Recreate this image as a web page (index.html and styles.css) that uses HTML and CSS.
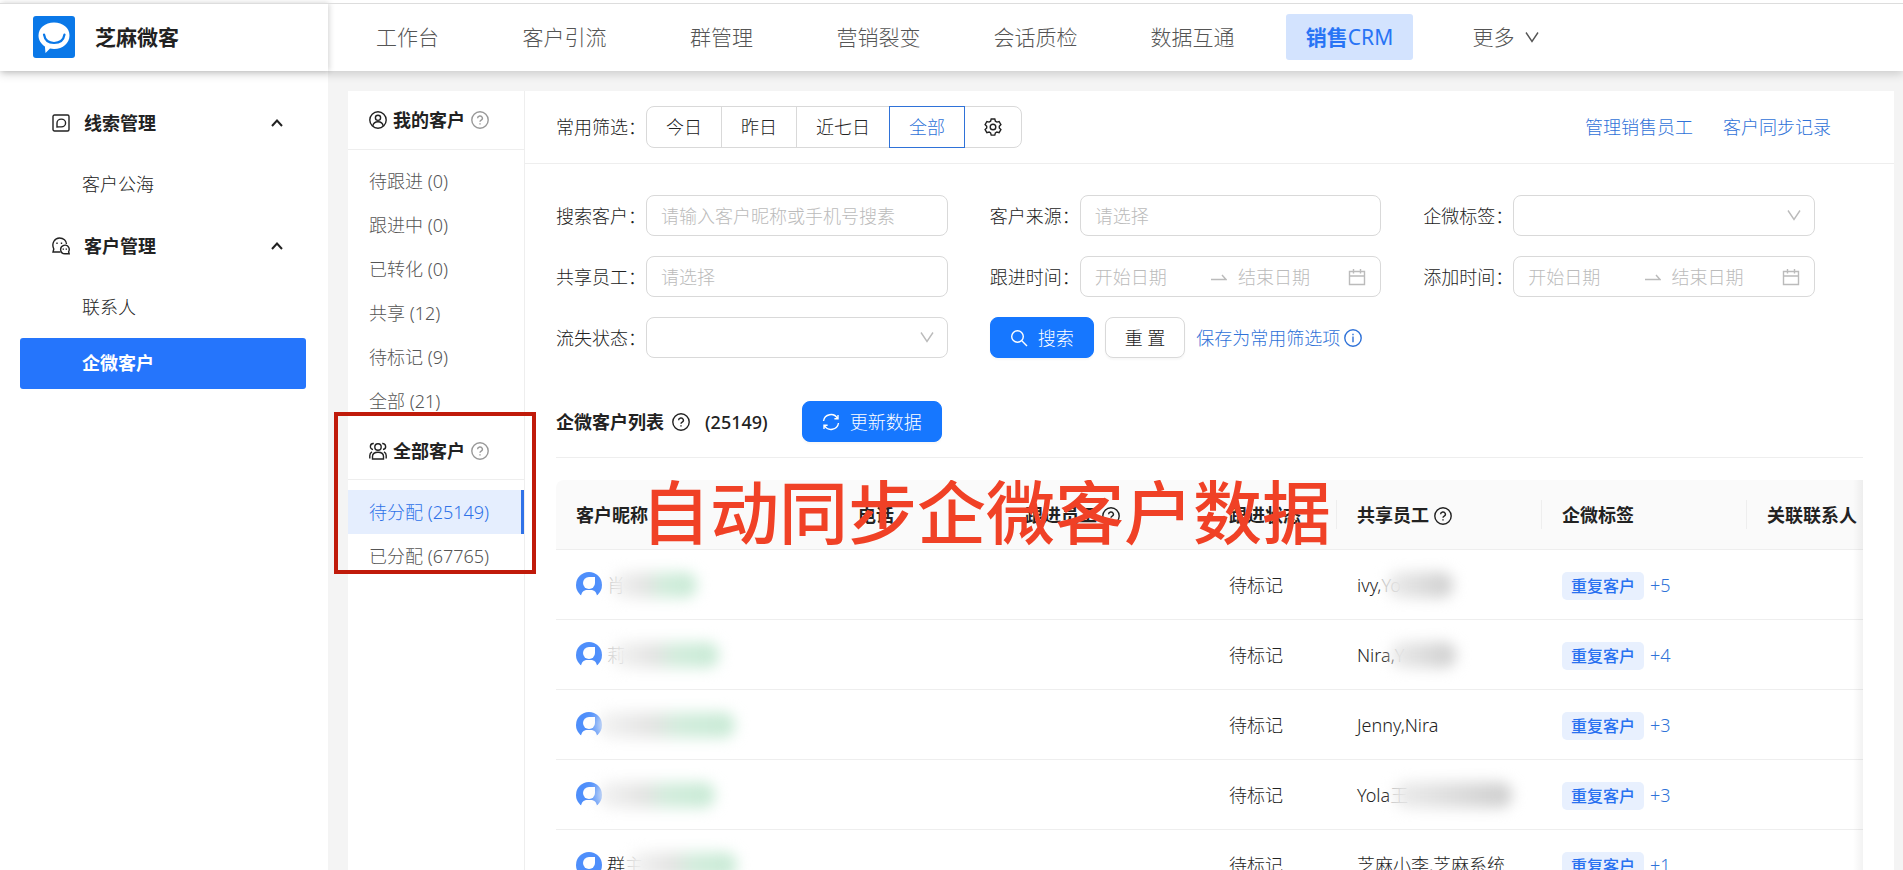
FILE: index.html
```html
<!DOCTYPE html>
<html lang="zh-CN">
<head>
<meta charset="utf-8">
<title>芝麻微客</title>
<link rel="stylesheet" href="styles.css">
</head>
<body>
<svg class="sprite" aria-hidden="true">
  <symbol id="i-help" viewBox="0 0 18 18"><circle cx="9" cy="9" r="8.2"/><path d="M6.600 7.200a2.400 2.200 0 1 1 3.600 1.900c-.8.5-1.200.8-1.200 1.700M9 12.200v1.400"/></symbol>
  <symbol id="i-info" viewBox="0 0 18 18"><circle cx="9" cy="9" r="8.2"/><path d="M9 7.600v5.600M9 4.800v1.400"/></symbol>
  <symbol id="i-down" viewBox="0 0 16 16"><path d="M2 3.500 8 12.500 14 3.500"/></symbol>
  <symbol id="i-up" viewBox="0 0 14 14"><path d="M2 10 7 4.500 12 10"/></symbol>
  <symbol id="i-swap" viewBox="0 0 16 16"><path d="M0 10.500h15L11 6"/></symbol>
  <symbol id="i-cal" viewBox="0 0 18 18"><path d="M1.500 3.500h15v13h-15zM1.500 8h15M5.500 1v4.500M12.500 1v4.500"/></symbol>
  <symbol id="i-avatar" viewBox="0 0 26 26"><circle cx="13" cy="13" r="13" fill="#4f8ffb"/><path d="M13 5h6v6a6 6 0 1 1-6-6z" fill="#fff"/><path d="M5 24c.5-4 3-6 6-6h4c3 0 5.500 2 6 6a13 13 0 0 1-16 0z" fill="#fff"/></symbol>
</svg>
<div class="app">
  <header class="topbar">
    <div class="brand">
      <svg class="logo" viewBox="0 0 42 42"><rect width="42" height="42" rx="3" fill="#0a78e8"/><path d="M21 6.500c9 0 15.500 5.500 15.500 13S30 33 21 33c-1.500 0-2.800-.2-4-.5L12.500 37l-.6-6.500C8 28 5.500 24 5.500 19.500 5.500 12 12 6.500 21 6.500z" fill="#fff"/><path d="M11 18.500c1 6 5 8.500 10 8.500s9.500-2.500 10.500-8.500" fill="none" stroke="#0a78e8" stroke-width="2.200" stroke-linecap="round"/></svg>
      <strong>芝麻微客</strong>
    </div>
    <nav class="nav">
      <a href="#">工作台</a><a href="#">客户引流</a><a href="#">群管理</a><a href="#">营销裂变</a><a href="#">会话质检</a><a href="#">数据互通</a><a href="#" class="on"><span><b>销售</b>CRM</span></a><a href="#">更多<svg class="ic nav-ic"><use href="#i-down"/></svg></a>
    </nav>
  </header>
  <div class="body">
    <aside class="side">
      <button class="group"><svg class="ic s18" viewBox="0 0 18 18"><rect x="1" y="1" width="16" height="16" rx="1.500"/><path d="M5 13V9A4.300 3.900 0 1 1 9.300 12.900H7z"/></svg>线索管理<svg class="ic s14"><use href="#i-up"/></svg></button>
      <a href="#" class="sub">客户公海</a>
      <button class="group"><svg class="ic s18" viewBox="0 0 18 18"><path d="M8.500 15H1l.8-3C-1 6 3 1 7.500 1 11.500 1 14.500 3.500 14.500 7M5 5.500v1.600M9.500 5.500v1.600"/><path d="M17.200 16.800H13a4.300 4.300 0 1 1 3.900-6c.6 1.500.4 2.800-.3 4zM11.300 11.500v1.200M14.300 11.500v1.200"/></svg>客户管理<svg class="ic s14"><use href="#i-up"/></svg></button>
      <a href="#" class="sub">联系人</a>
      <a href="#" class="sub on">企微客户</a>
    </aside>
    <main class="panel">
      <section class="cats">
        <h2><svg class="ic s18" viewBox="0 0 18 18"><circle cx="9" cy="9" r="8.200"/><circle cx="9" cy="6.800" r="2.600"/><path d="M3.800 15c.5-3 2.400-4.300 5.200-4.300s4.700 1.300 5.200 4.300"/></svg>我的客户<svg class="ic s18 mute"><use href="#i-help"/></svg></h2>
        <ul>
          <li><a href="#">待跟进 (0)</a></li><li><a href="#">跟进中 (0)</a></li><li><a href="#">已转化 (0)</a></li><li><a href="#">共享 (12)</a></li><li><a href="#">待标记 (9)</a></li><li><a href="#">全部 (21)</a></li>
        </ul>
        <div class="marked">
        <h2><svg class="ic s18" viewBox="0 0 18 18"><circle cx="9" cy="5" r="3.200"/><path d="M3.500 17v-2.500c0-2.800 2-4.300 5.500-4.300s5.500 1.500 5.500 4.300V17zM4.800 1.500a3 3 0 0 0-.8 6M13.200 1.500a3 3 0 0 1 .8 6M.8 16.500v-3c0-1.800.8-3 2.200-3.700M17.200 16.500v-3c0-1.800-.8-3-2.200-3.700"/></svg>全部客户<svg class="ic s18 mute"><use href="#i-help"/></svg></h2>
        <ul>
          <li class="on"><a href="#">待分配 (25149)</a></li><li><a href="#">已分配 (67765)</a></li>
        </ul>
        </div>
      </section>
      <section class="content">
        <div class="toolbar">
          <span>常用筛选：</span>
          <div class="seg"><button>今日</button><button>昨日</button><button>近七日</button><button class="on">全部</button><button aria-label="设置"><svg class="ic s18" viewBox="0 0 18 18"><path d="M7.200 1h3.600l.6 2.200 1.500.9 2.200-.6 1.800 3.100-1.600 1.600v1.700l1.600 1.600-1.800 3.100-2.200-.6-1.500.9-.6 2.200H7.200l-.6-2.200-1.500-.9-2.200.6-1.800-3.100 1.600-1.600V8.200L1.100 6.600l1.800-3.100 2.200.6 1.500-.9z"/><circle cx="9" cy="9" r="2.800"/></svg></button></div>
          <div class="links"><a href="#">管理销售员工</a><a href="#">客户同步记录</a></div>
        </div>
        <form class="filters">
          <div class="field"><label for="q">搜索客户：</label><input id="q" class="box" placeholder="请输入客户昵称或手机号搜素"></div>
          <div class="field"><label for="src">客户来源：</label><input id="src" class="box" placeholder="请选择"></div>
          <div class="field"><label for="tag">企微标签：</label><div class="pick"><select id="tag" class="box"></select><svg class="ic s16"><use href="#i-down"/></svg></div></div>
          <div class="field"><label for="staff">共享员工：</label><input id="staff" class="box" placeholder="请选择"></div>
          <div class="field"><label for="f1">跟进时间：</label><div class="box range"><input id="f1" placeholder="开始日期"><svg class="ic s16"><use href="#i-swap"/></svg><input aria-label="跟进结束日期" placeholder="结束日期"><svg class="ic s18"><use href="#i-cal"/></svg></div></div>
          <div class="field"><label for="a1">添加时间：</label><div class="box range"><input id="a1" placeholder="开始日期"><svg class="ic s16"><use href="#i-swap"/></svg><input aria-label="添加结束日期" placeholder="结束日期"><svg class="ic s18"><use href="#i-cal"/></svg></div></div>
          <div class="field"><label for="lost">流失状态：</label><div class="pick"><select id="lost" class="box"></select><svg class="ic s16"><use href="#i-down"/></svg></div></div>
          <div class="actions"><button type="button" class="btn primary"><svg class="ic s18" viewBox="0 0 18 18"><circle cx="7.500" cy="7.500" r="5.800"/><path d="m11.800 11.800 5.200 5.200"/></svg>搜索</button><button type="reset" class="btn">重 置</button><a href="#">保存为常用筛选项<svg class="ic s18"><use href="#i-info"/></svg></a></div>
        </form>
        <div class="list">
          <div class="listhead"><h3>企微客户列表<svg class="ic s18"><use href="#i-help"/></svg><span>(25149)</span></h3><button class="btn primary"><svg class="ic s18" viewBox="0 0 18 18"><path d="M1.500 8A7.500 7.500 0 0 1 15.500 5.500M16.500 10A7.500 7.500 0 0 1 2.500 12.500M16 2v3.800h-3.600M2 16v-3.800h3.600"/></svg>更新数据</button></div>
          <div class="tablewrap">
            <table>
              <colgroup><col class="c1"><col class="c2"><col class="c3"><col class="c4"><col class="c5"><col class="c6"><col></colgroup>
              <thead><tr><th>客户昵称</th><th>电话</th><th>跟进员工<svg class="ic s18"><use href="#i-help"/></svg></th><th class="sep">跟进状态</th><th class="sep">共享员工<svg class="ic s18"><use href="#i-help"/></svg></th><th class="sep">企微标签</th><th>关联联系人</th></tr></thead>
              <tbody>
                <tr><td><div class="who"><svg class="av"><use href="#i-avatar"/></svg><span class="hint">肖</span><i class="smear w1"></i></div></td><td></td><td></td><td>待标记</td><td><div class="who">ivy,<span class="hint">Yo</span><i class="smear gray w2"></i></div></td><td><span class="tag">重复客户</span><a href="#">+5</a></td><td></td></tr>
                <tr><td><div class="who"><svg class="av"><use href="#i-avatar"/></svg><span class="hint">莉</span><i class="smear w3"></i></div></td><td></td><td></td><td>待标记</td><td><div class="who">Nira,<span class="hint">Y</span><i class="smear gray w2"></i></div></td><td><span class="tag">重复客户</span><a href="#">+4</a></td><td></td></tr>
                <tr><td><div class="who"><svg class="av"><use href="#i-avatar"/></svg><i class="smear over w5"></i></div></td><td></td><td></td><td>待标记</td><td>Jenny,Nira</td><td><span class="tag">重复客户</span><a href="#">+3</a></td><td></td></tr>
                <tr><td><div class="who"><svg class="av"><use href="#i-avatar"/></svg><i class="smear over w4"></i></div></td><td></td><td></td><td>待标记</td><td><div class="who">Yola<span class="hint">王</span><i class="smear gray w4"></i></div></td><td><span class="tag">重复客户</span><a href="#">+3</a></td><td></td></tr>
                <tr><td><div class="who"><svg class="av"><use href="#i-avatar"/></svg>群<span class="hint">主</span><i class="smear w3"></i></div></td><td></td><td></td><td>待标记</td><td>芝麻小李,芝麻系统...</td><td><span class="tag">重复客户</span><a href="#">+1</a></td><td></td></tr>
              </tbody>
            </table>
            <p class="caption">自动同步企微客户数据</p>
          </div>
        </div>
      </section>
    </main>
  </div>
</div>
</body>
</html>
```
FILE: styles.css
```css
* { box-sizing: border-box; }
body {
  margin: 0;
  font: 18px/28px "Noto Sans", "Noto Sans CJK SC", sans-serif;
  font-weight: 300;
  color: #222;
  background: #f4f4f4;
}
button, input, select { font: inherit; color: inherit; }
button { cursor: pointer; }
a { color: inherit; text-decoration: none; }
h2, h3, ul, p { margin: 0; padding: 0; list-style: none; }
.sprite { position: absolute; width: 0; height: 0; }
.ic { flex: none; fill: none; stroke: currentColor; stroke-width: 1.4; }
.s14 { width: 14px; height: 14px; stroke-width: 2; }
.s16 { width: 16px; height: 16px; }
.s18 { width: 18px; height: 18px; }
.mute { color: #999; }

.app { height: 100vh; overflow: hidden; display: flex; flex-direction: column; }
.topbar {
  position: relative;
  z-index: 1;
  display: flex;
  height: 71px;
  flex: none;
  background: #fff;
  border-top: 3px solid #fff;
  box-shadow: 0 3px 9px rgba(0, 0, 0, .17);
}
.brand {
  display: flex;
  align-items: center;
  gap: 20px;
  width: 328px;
  padding: 0 0 2px 33px;
  border-top: 1px solid #ddd;
  box-shadow: 1px 0 6px rgba(0, 0, 0, .18);
}
.logo { width: 42px; height: 42px; }
.brand strong { font-size: 21px; font-weight: 600; }
.nav {
  flex: 1;
  display: grid;
  grid-template-columns: repeat(8, 157px);
  padding: 0 0 2px 1px;
  border-top: 1px solid #ddd;
  font-size: 21px;
  color: #555;
}
.nav a { display: flex; align-items: center; justify-content: center; gap: 8px; }
.nav .on span {
  padding: 9px 20px;
  border-radius: 3px;
  background: #d3e3fe;
  color: #2874f5;
  font-weight: 400;
}
.nav b { font-weight: 600; }
.nav-ic { width: 18px; height: 16px; }

.body { flex: 1; display: flex; min-height: 0; }
.side {
  width: 328px;
  flex: none;
  padding: 21px 22px 0 20px;
  background: #fff;
}
.group {
  display: flex;
  align-items: center;
  gap: 14px;
  width: 100%;
  height: 62px;
  padding: 0 22px 0 32px;
  border: 0;
  background: none;
  font-weight: 600;
}
.group .s14 { margin-left: auto; }
.sub { display: block; height: 61px; padding-left: 62px; line-height: 61px; }
.sub.on {
  height: 51px;
  line-height: 51px;
  background: #2575fc;
  color: #fff;
  border-radius: 3px;
  font-weight: 600;
}
.panel {
  flex: 1;
  min-width: 0;
  display: flex;
  margin: 20px 9px 0 20px;
  background: #fff;
}
.cats { width: 177px; flex: none; border-right: 1px solid #eee; color: #555; }
.cats h2 {
  display: flex;
  align-items: center;
  gap: 6px;
  height: 59px;
  padding-left: 21px;
  border-bottom: 1px solid #eee;
  font-size: 18px;
  font-weight: 600;
  color: #222;
}
.cats ul { padding-top: 9px; }
.cats li { height: 44px; padding-left: 21px; line-height: 44px; }
.cats li.on { background: #e5eefe; color: #2f72e8; border-right: 3px solid #2f72e8; }
.marked { position: relative; }
.marked h2 { height: 57px; }
.marked ul { padding-top: 10px; }
.marked::after {
  content: "";
  position: absolute;
  inset: -11px -12px 4px -14px;
  border: 4px solid #c01a0a;
}

.content { flex: 1; min-width: 0; }
.toolbar {
  display: flex;
  align-items: center;
  height: 73px;
  padding: 0 63px 0 31px;
  border-bottom: 1px solid #eee;
}
.toolbar > span, .field label { width: 90px; flex: none; white-space: nowrap; }
.seg { display: flex; }
.seg button {
  height: 42px;
  padding: 0 19px;
  margin-right: -1px;
  border: 1px solid #d9d9d9;
  background: #fff;
}
.seg button:first-child { border-radius: 8px 0 0 8px; }
.seg button:last-child { border-radius: 0 8px 8px 0; }
.seg svg { display: block; }
.seg .on { position: relative; border-color: #2f72d8; color: #2f72d8; }
.links { display: flex; gap: 30px; margin-left: auto; color: #2f72d8; }

.filters {
  display: grid;
  grid-template-columns: repeat(3, 1fr);
  gap: 20px 42px;
  padding: 31px 79px 0 31px;
}
.field { display: flex; align-items: center; min-width: 0; }
.box {
  flex: 1;
  min-width: 0;
  width: 100%;
  height: 41px;
  padding: 0 14px;
  border: 1px solid #d9d9d9;
  border-radius: 8px;
  background: #fff;
}
::placeholder { color: #bbb; opacity: 1; }
select { appearance: none; }
.pick { flex: 1; position: relative; color: #bbb; }
.pick select { display: block; }
.pick svg { position: absolute; right: 13px; top: 12px; }
.range { display: flex; align-items: center; gap: 11px; color: #bbb; }
.range input { flex: 17; min-width: 0; width: 0; padding: 0; border: 0; }
.range input:first-child { flex-grow: 18; }
.actions { display: flex; align-items: center; gap: 11px; white-space: nowrap; }
.actions a { display: flex; align-items: center; gap: 4px; color: #2f72d8; }
.btn {
  display: flex;
  align-items: center;
  gap: 10px;
  height: 41px;
  padding: 0 19px;
  border: 1px solid #d9d9d9;
  border-radius: 8px;
  background: #fff;
  box-shadow: 0 2px 2px rgba(0, 0, 0, .03);
}
.primary { background: #1677ff; border-color: #1677ff; color: #fff; }

.list { padding: 43px 31px 0 31px; }
.listhead { display: flex; align-items: center; gap: 34px; padding-bottom: 15px; border-bottom: 1px solid #eee; }
.listhead h3 { display: flex; align-items: center; gap: 8px; font-size: 18px; font-weight: 600; }
.listhead h3 span { margin-left: 7px; font-weight: 500; }
.tablewrap { position: relative; margin-top: 22px; overflow: hidden; border-radius: 8px 0 0 0; }
.tablewrap::after {
  content: "";
  position: absolute;
  inset: 0 0 0 auto;
  width: 10px;
  background: linear-gradient(to right, transparent, rgba(0, 0, 0, .05));
}
table { width: 100%; table-layout: fixed; border-collapse: separate; border-spacing: 0; }
.c1 { width: 282px; }
.c2 { width: 167px; }
.c3 { width: 204px; }
.c4 { width: 128px; }
.c5, .c6 { width: 205px; }
th, td {
  height: 70px;
  padding: 0 0 0 20px;
  border-bottom: 1px solid #eee;
  text-align: left;
  white-space: nowrap;
}
th { position: relative; background: #fafafa; font-weight: 600; }
th svg { margin-left: 5px; vertical-align: -3px; }
.sep::after { content: ""; position: absolute; right: 0; top: 20px; height: 29px; border-right: 1px solid #eee; }
.who { display: flex; align-items: center; }
.av { width: 26px; height: 26px; margin-right: 5px; }
.hint { color: #bbb; }
.smear {
  height: 26px;
  margin-left: -14px;
  border-radius: 12px;
  background: linear-gradient(to right, #f4f4f4 0, #e4e4e3 40%, #d2eddc 60%, #c8ead5);
  filter: blur(7px);
}
.gray { background: linear-gradient(to right, #ececec, #cecece); }
.over { margin-left: -10px; }
.w1 { width: 86px; }
.w2 { width: 66px; }
.w3 { width: 108px; }
.w4 { width: 118px; }
.w5 { width: 138px; }
.tag {
  display: inline-block;
  height: 28px;
  margin-right: 6px;
  padding: 0 9px;
  border-radius: 5px;
  background: #e8f0fe;
  color: #2871f0;
  font-size: 16px;
  font-weight: 500;
  vertical-align: middle;
}
td a { color: #2f72d8; vertical-align: middle; }
.caption {
  position: absolute;
  left: 85px;
  top: -17px;
  font-size: 69px;
  line-height: 98px;
  font-weight: 500;
  color: #f04126;
  white-space: nowrap;
}
```
